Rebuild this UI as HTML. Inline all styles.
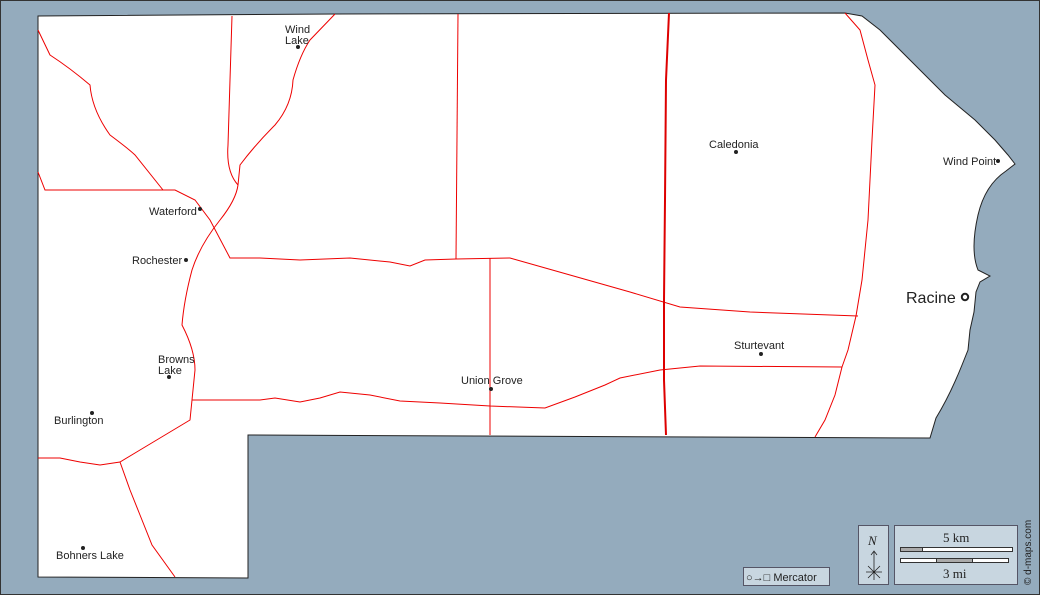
<!DOCTYPE html>
<html><head><meta charset="utf-8"><style>
html,body{margin:0;padding:0;background:#94abbd;}
svg{display:block}
text{font-family:"Liberation Sans",sans-serif;font-size:11px;fill:#222}
</style></head><body>
<svg width="1040" height="595" viewBox="0 0 1040 595" xmlns="http://www.w3.org/2000/svg">
<rect x="0.5" y="0.5" width="1039" height="594" fill="#94abbd" stroke="#333"/>
<path d="M38,16 L335,14 L845,13 L862,16 L880,30 L910,60 L945,95 L975,120 L995,140 L1008,155 L1015,164 L1006,171 Q985,185 978,215 Q970,250 978,270 L990,276 L980,282 L976,292 L974,312 L970,330 L968,350 L962,365 Q950,395 936,418 L930,438 L248,435 L248,578 L38,577 Z" fill="#fff" stroke="#222" stroke-width="1"/>
<g fill="none" stroke="#e00" stroke-width="1">
<path d="M38,30 L50,55 Q70,68 90,85 Q92,110 110,135 Q130,150 135,155 L163,190"/>
<path d="M38,172 L45,190 L175,190 L195,200 L210,220 L230,258 L260,258 L300,260 L350,258 L390,262 L410,266 L425,260 L456,259 L510,258 L570,275 L630,292 L680,307 L750,312 L858,316"/>
<path d="M232,16 L230,80 L228,145 Q226,172 238,185 Q236,200 220,220 Q200,245 192,270 Q184,300 182,325 Q195,350 195,370 L192,400 L190,420 L170,432 L140,450 L120,462 L100,465 L80,462 L60,458 L38,458"/>
<path d="M335,14 L310,40 Q300,55 293,80 Q292,105 275,125 Q255,145 240,165 L238,185"/>
<path d="M192,400 L260,400 L275,398 L300,402 L320,398 L340,392 L370,395 L400,401 L440,403 L490,406 L545,408 L575,397 L605,385 L620,378 L660,370 L700,366 L842,367"/>
<path d="M458,14 L456,259"/>
<path d="M490,258 L490,435"/>
<path d="M845,13 L860,30 L868,60 L875,85 L872,140 L868,220 L862,280 L856,316 L848,350 L842,367 L835,395 L825,420 L815,437"/>
<path d="M120,462 L130,490 L140,515 L152,545 L175,577"/>
</g>
<path d="M669,13 L666,80 L665,200 L664,300 L664,380 L666,435" fill="none" stroke="#d00" stroke-width="2"/>
<g fill="#222">
<circle cx="298" cy="47" r="2"/><circle cx="200" cy="209" r="2"/><circle cx="186" cy="260" r="2"/>
<circle cx="169" cy="377" r="2"/><circle cx="92" cy="413" r="2"/><circle cx="83" cy="548" r="2"/>
<circle cx="491" cy="389" r="2"/><circle cx="736" cy="152" r="2"/><circle cx="761" cy="354" r="2"/>
<circle cx="998" cy="161" r="2"/>
</g>
<circle cx="965" cy="297" r="3.2" fill="none" stroke="#222" stroke-width="2"/>
<text x="285" y="33">Wind</text><text x="285" y="44">Lake</text>
<text x="149" y="215">Waterford</text>
<text x="132" y="264">Rochester</text>
<text x="158" y="363">Browns</text><text x="158" y="374">Lake</text>
<text x="54" y="424">Burlington</text>
<text x="56" y="559">Bohners Lake</text>
<text x="461" y="384">Union Grove</text>
<text x="709" y="148">Caledonia</text>
<text x="734" y="349">Sturtevant</text>
<text x="943" y="165">Wind Point</text>
<text x="906" y="303" style="font-size:16px">Racine</text>
<rect x="743.5" y="567.5" width="86" height="18" fill="#c8d6e0" stroke="#556"/>
<text x="746" y="581">○→□ Mercator</text>
<rect x="858.5" y="525.5" width="30" height="59" fill="#c8d6e0" stroke="#556"/>
<text x="868" y="545" style="font-family:'Liberation Serif',serif;font-style:italic;font-size:13px">N</text>
<path d="M874,552 L874,580 M866,572 L882,572 M868,566 L880,578 M880,566 L868,578 M871,555 L874,551 L877,555" stroke="#222" fill="none" stroke-width="0.8"/>
<rect x="894.5" y="525.5" width="123" height="59" fill="#c8d6e0" stroke="#556"/>
<text x="943" y="542" style="font-family:'Liberation Serif',serif;font-size:13px">5 km</text>
<rect x="900.5" y="547.5" width="112" height="4" fill="#fff" stroke="#333"/>
<rect x="900.5" y="547.5" width="22" height="4" fill="#aaa" stroke="#333"/>
<rect x="900.5" y="558.5" width="108" height="4" fill="#fff" stroke="#333"/>
<rect x="936.5" y="558.5" width="36" height="4" fill="#aaa" stroke="#333"/>
<text x="943" y="578" style="font-family:'Liberation Serif',serif;font-size:13px">3 mi</text>
<text transform="translate(1031,585) rotate(-90)" style="font-size:10px">© d-maps.com</text>
</svg>
</body></html>
